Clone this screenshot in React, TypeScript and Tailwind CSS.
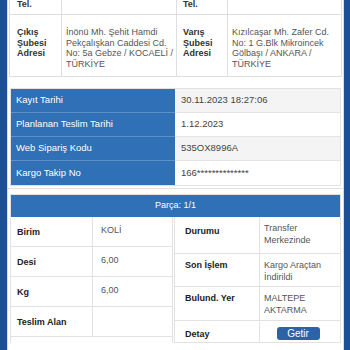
import React from 'react';

const font = "font-['Liberation_Sans','Helvetica_Neue',Arial,sans-serif]";

const infoRows = [
  { label: 'Kayıt Tarihi', value: '30.11.2023 18:27:06', alt: true },
  { label: 'Planlanan Teslim Tarihi', value: '1.12.2023', alt: false },
  { label: 'Web Sipariş Kodu', value: '535OX8996A', alt: true },
  { label: 'Kargo Takip No', value: '166**************', alt: false },
];

const leftRows = [
  { label: 'Birim', value: 'KOLİ' },
  { label: 'Desi', value: '6,00' },
  { label: 'Kg', value: '6,00' },
  { label: 'Teslim Alan', value: '' },
];

export default function App() {
  return (
    <div className={`w-[350px] h-[350px] overflow-hidden flex bg-white ${font}`}>
      {/* side strip */}
      <div className="w-[7px] shrink-0 bg-[#1d4f97]" />

      <div className="flex-1 flex flex-col border-x border-[#dcdcdc]">
        {/* Branch addresses */}
        <div className="mx-[1px] grid grid-cols-[52px_115px_51px_1fr] border-x border-b border-[#dedede] text-[9px] leading-[10.5px]">
          <div className="h-[15px] flex items-end pb-[5px] pl-[7px] font-bold text-[#333] border-r border-b border-[#dedede]">Tel.</div>
          <div className="h-[15px] border-r border-b border-[#dedede]" />
          <div className="h-[15px] flex items-end pb-[5px] pl-[6px] font-bold text-[#333] border-r border-b border-[#dedede]">Tel.</div>
          <div className="h-[15px] border-b border-[#dedede]" />

          <div className="pt-[12px] pb-[7px] pl-[7px] font-bold text-[#333] border-r border-[#dedede]">
            Çıkış<br />Şubesi<br />Adresi
          </div>
          <div className="pt-[12px] pb-[7px] pl-[4px] pr-[2px] text-[#555] border-r border-[#dedede]">
            İnönü Mh. Şehit Hamdi Pekçalışkan Caddesi Cd. No: 5a Gebze / KOCAELİ / TÜRKİYE
          </div>
          <div className="pt-[12px] pb-[7px] pl-[6px] font-bold text-[#333] border-r border-[#dedede]">
            Varış<br />Şubesi<br />Adresi
          </div>
          <div className="pt-[12px] pb-[7px] pl-[4px] pr-[2px] text-[#555]">
            Kızılcaşar Mh. Zafer Cd. No: 1 G.Blk Mikroincek Gölbaşı / ANKARA / TÜRKİYE
          </div>
        </div>

        {/* Shipment info */}
        <div className="mt-[11px] mx-[2px] border border-[#e2e2e2] text-[9.5px]">
          {infoRows.map((r, i) => (
            <div key={r.label} className="flex h-[24px]">
              <div
                className={`w-[164px] flex items-center pl-[5px] bg-[#3070b6] text-white ${
                  i < infoRows.length - 1 ? 'border-b border-[#5d8fc8]' : ''
                }`}
              >
                {r.label}
              </div>
              <div
                className={`flex-1 flex items-center pl-[6px] text-[#444] ${r.alt ? 'bg-[#f4f4f4]' : 'bg-white'} ${
                  i < infoRows.length - 1 ? 'border-b border-[#e4e4e4]' : ''
                }`}
              >
                {r.value}
              </div>
            </div>
          ))}
        </div>

        {/* Parça */}
        <div className="mt-[2px] border-t border-[#e2e2e2] pt-[5px]">
          <div className="mx-[2px] border border-[#e2e2e2] border-b-0">
            <div className="h-[22px] flex items-center justify-center bg-[#3070b6] text-white text-[9px]">
              Parça: 1/1
            </div>
            <div className="grid grid-cols-[162px_1fr] gap-[1px] text-[9px] leading-[12px]">
              {/* left table */}
              <div className="flex flex-col border-r border-[#e2e2e2]">
                {leftRows.map((r) => (
                  <div key={r.label} className="flex h-[30px] border-b border-[#e2e2e2]">
                    <div className="w-[82px] pl-[6px] pt-[9px] font-bold text-[#222] border-r border-[#e2e2e2]">{r.label}</div>
                    <div className="flex-1 pl-[8px] pt-[7px] text-[#555]">{r.value}</div>
                  </div>
                ))}
              </div>

              {/* right table */}
              <div className="flex flex-col border-l border-[#e2e2e2]">
                <div className="flex h-[37px] border-b border-[#e2e2e2]">
                  <div className="w-[85px] pl-[10px] pt-[8px] font-bold text-[#222] border-r border-[#e2e2e2]">Durumu</div>
                  <div className="flex-1 pl-[4px] pt-[5px] text-[#555]">Transfer<br />Merkezinde</div>
                </div>
                <div className="flex h-[33px] border-b border-[#e2e2e2]">
                  <div className="w-[85px] pl-[10px] pt-[5px] font-bold text-[#222] border-r border-[#e2e2e2]">Son İşlem</div>
                  <div className="flex-1 pl-[4px] pt-[5px] text-[#555]">Kargo Araçtan<br />İndirildi</div>
                </div>
                <div className="flex h-[34px] border-b border-[#e2e2e2]">
                  <div className="w-[85px] pl-[10px] pt-[5px] font-bold text-[#222] border-r border-[#e2e2e2]">Bulund. Yer</div>
                  <div className="flex-1 pl-[4px] pt-[5px] text-[#555]">MALTEPE<br />AKTARMA</div>
                </div>
                <div className="flex h-[22px] border-b border-[#e2e2e2]">
                  <div className="w-[85px] pl-[10px] pt-[7px] font-bold text-[#222] border-r border-[#e2e2e2]">Detay</div>
                  <div className="flex-1 flex items-start justify-center pt-[6px] pr-[4px]">
                    <button className="w-[43px] h-[13px] rounded-[3px] bg-[#2c62a7] text-white text-[10px] leading-[13px]">
                      Getir
                    </button>
                  </div>
                </div>
              </div>
            </div>
          </div>
        </div>
      </div>

      {/* side strip */}
      <div className="w-[6px] shrink-0 bg-[#1d4f97]" />
    </div>
  );
}
